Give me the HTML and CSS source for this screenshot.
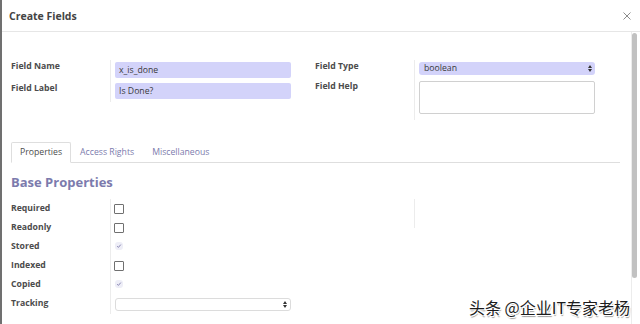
FILE: index.html
```html
<!DOCTYPE html>
<html lang="en">
<head>
    <meta charset="UTF-8">
    <meta name="viewport" content="width=device-width, initial-scale=1.0">
    <title>Create Fields</title>
    <link rel="stylesheet" href="styles.css">
</head>
<body>
    <div class="modal">
        <header class="modal-header">
            <h4 class="modal-title">Create Fields</h4>
            <span class="close">
                <svg width="8" height="8" viewBox="0 0 8 8"><path d="M0.5 0.5L7.5 7.5M7.5 0.5L0.5 7.5" stroke="#8c8c8c" stroke-width="1"/></svg>
            </span>
        </header>

        <div class="modal-main">
            <div class="modal-body">
                <div class="group">
                    <div class="col">
                        <label class="lbl">Field Name</label>
                        <div class="val"><div class="input">x_is_done</div></div>
                        <label class="lbl second">Field Label</label>
                        <div class="val"><div class="input">Is Done?</div></div>
                    </div>
                    <div class="col">
                        <label class="lbl">Field Type</label>
                        <div class="val val-select">
                            <div class="select required">
                                <span>boolean</span>
                                <svg width="4" height="7" viewBox="0 0 4 7"><path d="M0 3L2 0L4 3ZM0 4L4 4L2 7Z" fill="#333"/></svg>
                            </div>
                        </div>
                        <label class="lbl">Field Help</label>
                        <div class="val val-help"><div class="textarea"></div></div>
                    </div>
                </div>

                <div class="tabs">
                    <span class="tab active">Properties</span>
                    <span class="tab">Access Rights</span>
                    <span class="tab">Miscellaneous</span>
                </div>

                <h3 class="section">Base Properties</h3>

                <div class="group">
                    <div class="col base">
                        <label class="lbl">Required</label>
                        <div class="val cb"><span class="box"></span></div>
                        <label class="lbl">Readonly</label>
                        <div class="val cb"><span class="box"></span></div>
                        <label class="lbl">Stored</label>
                        <div class="val cb">
                            <svg class="tick" width="10" height="10" viewBox="0 0 10 10"><rect x="1" y="1" width="8" height="8" rx="3" fill="#eeeef7"/><path d="M3.2 5.2L4.4 6.4L6.8 3.6" stroke="#8886b3" stroke-width="1" fill="none"/></svg>
                        </div>
                        <label class="lbl">Indexed</label>
                        <div class="val cb"><span class="box"></span></div>
                        <label class="lbl">Copied</label>
                        <div class="val cb">
                            <svg class="tick" width="10" height="10" viewBox="0 0 10 10"><rect x="1" y="1" width="8" height="8" rx="3" fill="#eeeef7"/><path d="M3.2 5.2L4.4 6.4L6.8 3.6" stroke="#8886b3" stroke-width="1" fill="none"/></svg>
                        </div>
                        <label class="lbl">Tracking</label>
                        <div class="val val-track">
                            <div class="select plain">
                                <span></span>
                                <svg width="4" height="7" viewBox="0 0 4 7"><path d="M0 3L2 0L4 3ZM0 4L4 4L2 7Z" fill="#333"/></svg>
                            </div>
                        </div>
                    </div>
                    <div class="col base">
                        <span class="lbl"></span>
                        <div class="val empty"></div>
                    </div>
                </div>
            </div>

            <div class="scrollbar"><div class="thumb"></div></div>
        </div>

        <div class="watermark">头条 @企业IT专家老杨</div>
    </div>
</body>
</html>
```

FILE: styles.css
```css
/* Reset */
* {
    margin: 0;
    padding: 0;
    box-sizing: border-box;
}

body {
    font-family: "Open Sans", sans-serif;
    font-size: 8.7px;
    color: #4c4c4c;
    background-color: #fff;
}

/* Dialog frame */
.modal {
    position: relative;
    width: 640px;
    height: 324px;
    border-left: 2px solid #707070;
    display: flex;
    flex-direction: column;
    overflow: hidden;
}

.modal-header {
    height: 32px;
    flex: none;
    border-bottom: 1px solid #e6e6e6;
    display: flex;
    align-items: center;
    justify-content: space-between;
    padding: 0 9px 0 7px;
}

.modal-title {
    font-size: 10.5px;
    font-weight: 700;
    color: #444;
}

.close {
    display: flex;
}

.modal-main {
    flex: 1;
    display: flex;
    min-height: 0;
}

.modal-body {
    flex: 1;
    padding: 28px 11px 0 9px;
}

/* Two column form groups */
.group {
    display: grid;
    grid-template-columns: 304px 304px;
}

.col {
    display: grid;
    grid-template-columns: 99px 1fr;
    align-content: start;
}

.lbl {
    font-weight: 700;
    line-height: 12px;
}

.lbl.second {
    padding-top: 1px;
}

.val {
    border-left: 1px solid #ececec;
    padding: 2px 0 3px 4px;
}

.val-select {
    padding: 2px 0 5px 4px;
}

.val-help {
    padding: 1px 0 6px 4px;
}

.input {
    width: 176px;
    height: 16px;
    line-height: 16px;
    padding: 0 4px;
    background-color: #d3d3fa;
    border-radius: 2px;
    color: #3a3a3a;
}

.select {
    width: 176px;
    height: 13px;
    line-height: 13px;
    padding: 0 3px 0 5px;
    border-radius: 3px;
    display: flex;
    align-items: center;
    justify-content: space-between;
    color: #3a3a3a;
}

.select.required {
    background-color: #d3d3fa;
}

.select.plain {
    background-color: #fff;
    border: 1px solid #dcdcdc;
}

.textarea {
    width: 176px;
    height: 33px;
    border: 1px solid #d0d0d0;
    border-radius: 2px;
}

/* Tabs */
.tabs {
    display: flex;
    margin-top: 22px;
    border-bottom: 1px solid #dedede;
}

.tab {
    padding: 4px 8px;
    line-height: 11px;
    border: 1px solid transparent;
    margin-bottom: -1px;
    color: #7c7bad;
}

.tab.active {
    color: #4c4c4c;
    border-color: #dedede;
    border-bottom-color: #fff;
    border-radius: 2px 2px 0 0;
}

.section {
    font-size: 13px;
    line-height: 16px;
    font-weight: 700;
    color: #7c7bad;
    margin: 11px 0 9px;
}

/* Base properties rows */
.base .lbl {
    padding-top: 3px;
}

.val.cb {
    height: 19px;
    padding: 5px 0 4px 3px;
}

.box {
    display: block;
    width: 10px;
    height: 10px;
    border: 1px solid #707070;
    border-radius: 1px;
    background-color: #fff;
}

.tick {
    display: block;
    margin-top: -1px;
}

.val-track {
    padding: 4px 0 3px 4px;
}

.val.empty {
    height: 29px;
    padding: 0;
}

/* Fake scrollbar */
.scrollbar {
    width: 9px;
    flex: none;
    border-left: 1px solid #ececec;
    padding: 1px 3px 0 0;
}

.thumb {
    height: 245px;
    background-color: #c1c1c1;
    border-radius: 3px;
}

/* Watermark */
.watermark {
    position: absolute;
    right: 10px;
    bottom: 7px;
    font-family: "Noto Sans CJK SC", sans-serif;
    font-size: 16px;
    line-height: 20px;
    color: #1c1c1c;
    text-shadow: 1px 1px 0 #fff, -1px -1px 0 #fff, 1px -1px 0 #fff, -1px 1px 0 #fff, 1px 2px 1px #999;
}
```
